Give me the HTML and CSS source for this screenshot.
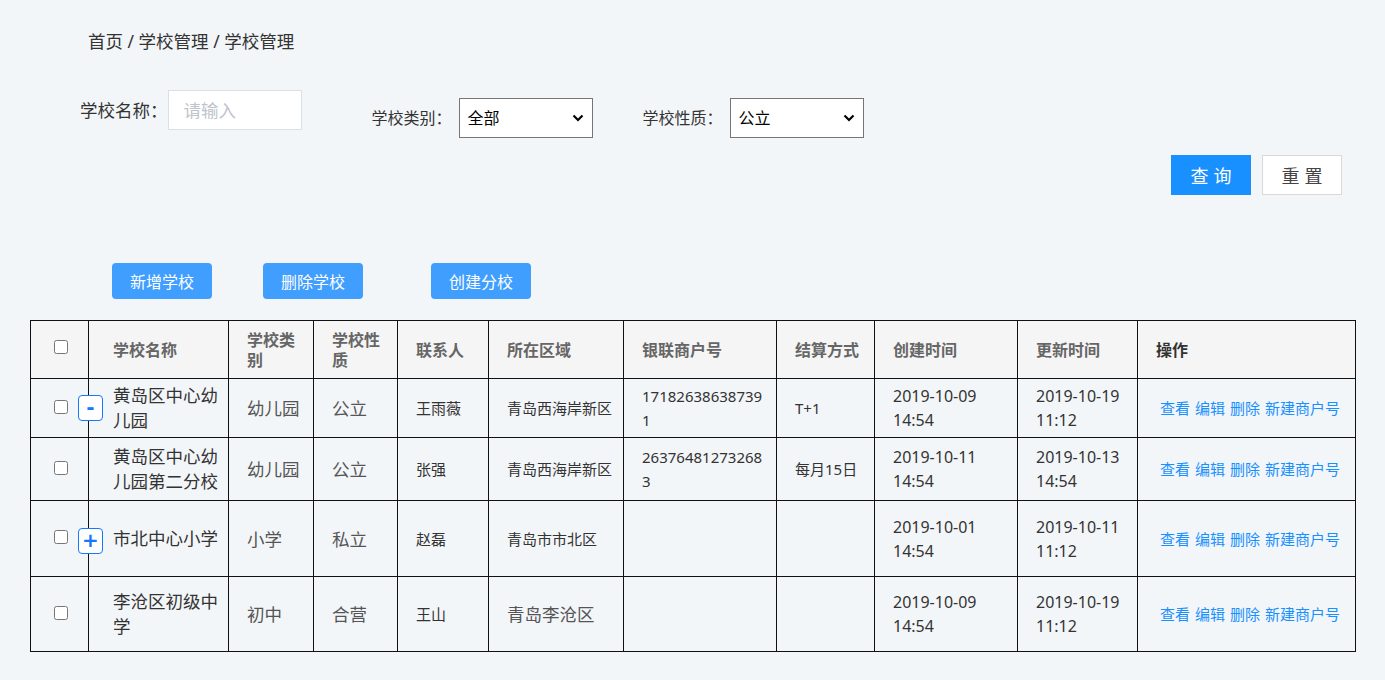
FILE: index.html
```html
<!DOCTYPE html>
<html lang="zh-CN">
<head>
<meta charset="utf-8">
<title>学校管理</title>
<link rel="stylesheet" href="styles.css">
</head>
<body>
<div class="page">
  <div class="breadcrumb">首页 / 学校管理 / 学校管理</div>

  <div class="filters">
    <div class="field field-first">
      <label class="label label-lg">学校名称：</label>
      <input class="text-input" type="text" placeholder="请输入">
    </div>
    <div class="field field-cat">
      <label class="label">学校类别：</label>
      <span class="select-wrap">
        <select class="select"><option>全部</option><option>幼儿园</option><option>小学</option><option>初中</option></select>
        <svg class="chevron" width="12" height="8" viewBox="0 0 12 8"><path d="M1.5 1.5 L6 6 L10.5 1.5" fill="none" stroke="#000" stroke-width="2.2"/></svg>
      </span>
    </div>
    <div class="field field-nature">
      <label class="label">学校性质：</label>
      <span class="select-wrap">
        <select class="select"><option>公立</option><option>私立</option><option>合营</option></select>
        <svg class="chevron" width="12" height="8" viewBox="0 0 12 8"><path d="M1.5 1.5 L6 6 L10.5 1.5" fill="none" stroke="#000" stroke-width="2.2"/></svg>
      </span>
    </div>
  </div>

  <div class="query-row">
    <button class="btn-primary">查询</button>
    <button class="btn-default">重置</button>
  </div>

  <div class="action-row">
    <button class="btn-action">新增学校</button>
    <button class="btn-action btn-del">删除学校</button>
    <button class="btn-action btn-branch">创建分校</button>
  </div>

  <table class="grid">
    <colgroup>
      <col class="c-check"><col class="c-name"><col class="c-type"><col class="c-nature"><col class="c-contact"><col class="c-area"><col class="c-merchant"><col class="c-settle"><col class="c-created"><col class="c-updated"><col class="c-ops">
    </colgroup>
    <thead>
      <tr class="head">
        <th class="cell-check"><input type="checkbox"></th>
        <th class="th-name">学校名称</th>
        <th>学校类别</th>
        <th>学校性质</th>
        <th>联系人</th>
        <th>所在区域</th>
        <th>银联商户号</th>
        <th>结算方式</th>
        <th>创建时间</th>
        <th>更新时间</th>
        <th class="th-ops">操作</th>
      </tr>
    </thead>
    <tbody>
      <tr class="r1">
        <td class="cell-check"><input type="checkbox"></td>
        <td class="td-name"><span class="toggle toggle-minus">-</span>黄岛区中心幼儿园</td>
        <td class="td-big">幼儿园</td>
        <td class="td-big">公立</td>
        <td>王雨薇</td>
        <td>青岛西海岸新区</td>
        <td class="td-num">171826386387391</td>
        <td>T+1</td>
        <td class="td-date">2019-10-09<br>14:54</td>
        <td class="td-date">2019-10-19<br>11:12</td>
        <td class="td-ops"><div class="ops"><a>查看</a><a>编辑</a><a>删除</a><a>新建商户号</a></div></td>
      </tr>
      <tr class="r2">
        <td class="cell-check"><input type="checkbox"></td>
        <td class="td-name">黄岛区中心幼儿园第二分校</td>
        <td class="td-big">幼儿园</td>
        <td class="td-big">公立</td>
        <td>张强</td>
        <td>青岛西海岸新区</td>
        <td class="td-num">263764812732683</td>
        <td>每月15日</td>
        <td class="td-date">2019-10-11<br>14:54</td>
        <td class="td-date">2019-10-13<br>14:54</td>
        <td class="td-ops"><div class="ops"><a>查看</a><a>编辑</a><a>删除</a><a>新建商户号</a></div></td>
      </tr>
      <tr class="r3">
        <td class="cell-check"><input type="checkbox"></td>
        <td class="td-name"><span class="toggle toggle-plus">+</span>市北中心小学</td>
        <td class="td-big">小学</td>
        <td class="td-big">私立</td>
        <td>赵磊</td>
        <td>青岛市市北区</td>
        <td class="td-num"></td>
        <td></td>
        <td class="td-date">2019-10-01<br>14:54</td>
        <td class="td-date">2019-10-11<br>11:12</td>
        <td class="td-ops"><div class="ops"><a>查看</a><a>编辑</a><a>删除</a><a>新建商户号</a></div></td>
      </tr>
      <tr class="r4">
        <td class="cell-check"><input type="checkbox"></td>
        <td class="td-name">李沧区初级中学</td>
        <td class="td-big">初中</td>
        <td class="td-big">合营</td>
        <td>王山</td>
        <td class="td-big">青岛李沧区</td>
        <td class="td-num"></td>
        <td></td>
        <td class="td-date">2019-10-09<br>14:54</td>
        <td class="td-date">2019-10-19<br>11:12</td>
        <td class="td-ops"><div class="ops"><a>查看</a><a>编辑</a><a>删除</a><a>新建商户号</a></div></td>
      </tr>
    </tbody>
  </table>
</div>
</body>
</html>
```

FILE: styles.css
```css
* { box-sizing: border-box; }

html, body {
  margin: 0;
  padding: 0;
  background: #f3f6f9;
}

body {
  font-family: "Noto Sans", "Noto Sans CJK SC", sans-serif;
  color: #333;
}

.page {
  padding-top: 28px;
}

.breadcrumb {
  margin-left: 88px;
  font-size: 17.5px;
  line-height: 26px;
  color: #333;
}

.filters {
  display: flex;
  align-items: flex-start;
  margin-top: 36px;
  padding-left: 80px;
}

.field {
  display: flex;
  align-items: center;
  gap: 7px;
}

.field-first {
  gap: 0;
}

.field-cat {
  margin-top: 8px;
  margin-left: 70px;
}

.field-nature {
  margin-top: 8px;
  margin-left: 50px;
}

.label {
  font-size: 16px;
  color: #333;
  line-height: 22px;
}

.label-lg {
  font-size: 17.5px;
}

.text-input {
  width: 134px;
  height: 40px;
  border: 1px solid #dcdfe6;
  background: #fff;
  padding: 0 15px;
  font-family: inherit;
  font-size: 17.5px;
  color: #333;
  outline: none;
  border-radius: 0;
}

.text-input::placeholder {
  color: #c0c4cc;
}

.select-wrap {
  position: relative;
  display: inline-block;
  width: 134px;
  height: 40px;
}

.select {
  appearance: none;
  -webkit-appearance: none;
  width: 134px;
  height: 40px;
  border: 1px solid #767676;
  background: #fff;
  font-family: inherit;
  font-size: 16px;
  color: #000;
  padding: 0 8px;
  border-radius: 0;
}

.chevron {
  position: absolute;
  right: 9px;
  top: 16px;
  pointer-events: none;
}

.query-row {
  display: flex;
  justify-content: flex-end;
  gap: 11px;
  margin-top: 17px;
  padding-right: 43px;
}

.btn-primary,
.btn-default {
  width: 80px;
  height: 40px;
  font-family: inherit;
  font-size: 18px;
  letter-spacing: 5px;
  padding: 0 0 0 5px;
  border-radius: 0;
  cursor: pointer;
}

.btn-primary {
  background: #1890ff;
  border: 1px solid #1890ff;
  color: #fff;
}

.btn-default {
  background: #fff;
  border: 1px solid #d9d9d9;
  color: #444;
}

.action-row {
  display: flex;
  margin-top: 68px;
  padding-left: 112px;
}

.btn-action {
  width: 100px;
  height: 36px;
  background: #409eff;
  border: none;
  border-radius: 4px;
  color: #fff;
  font-family: inherit;
  font-size: 16px;
  padding: 0;
  cursor: pointer;
}

.btn-del { margin-left: 51px; }
.btn-branch { margin-left: 68px; }

.grid {
  margin-top: 21px;
  margin-left: 30px;
  width: 1325px;
  table-layout: fixed;
  border-collapse: collapse;
  background: #f3f6f9;
}

.c-check { width: 58px; }
.c-name { width: 140px; }
.c-type { width: 85px; }
.c-nature { width: 84px; }
.c-contact { width: 91px; }
.c-area { width: 135px; }
.c-merchant { width: 153px; }
.c-settle { width: 98px; }
.c-created { width: 143px; }
.c-updated { width: 120px; }
.c-ops { width: 218px; }

.grid th,
.grid td {
  border: 1px solid #111;
  padding: 0 8px 0 18px;
  vertical-align: middle;
  text-align: left;
}

.grid th {
  background: #f5f5f5;
  font-size: 16px;
  font-weight: 700;
  color: #666;
  line-height: 20px;
}

.grid th.th-ops {
  color: #333;
}

.grid td {
  font-size: 15px;
  line-height: 24px;
  color: #333;
}

.grid .cell-check {
  padding: 0;
  text-align: center;
}

.cell-check input {
  margin: 0 0 6px 2px;
  width: 14px;
  height: 14px;
  vertical-align: middle;
}

.grid .th-name {
  padding-left: 24px;
}

.grid .td-name {
  position: relative;
  padding: 0 8px 0 24px;
  font-size: 17.5px;
  line-height: 25px;
  color: #333;
}

.grid .td-big {
  font-size: 17.5px;
  color: #555;
}

.grid .td-num {
  padding-right: 11px;
  word-break: break-all;
}

.grid .td-date {
  font-size: 16px;
}

.grid .td-ops {
  padding: 0 0 0 22px;
}

.ops {
  display: flex;
  gap: 5px;
  white-space: nowrap;
}

.ops a {
  color: #1890ff;
  font-size: 15px;
  cursor: pointer;
}

.toggle {
  position: absolute;
  left: -11px;
  top: 50%;
  transform: translateY(-50%);
  width: 25px;
  height: 26px;
  border: 1px solid #1677ff;
  border-radius: 4px;
  background: #fff;
  color: #1677ff;
  font-weight: 700;
  font-size: 20px;
  line-height: 22px;
  text-align: center;
  font-family: "DejaVu Sans", sans-serif;
}

.toggle-plus { margin-top: 2px; }

.head { height: 58px; }
.r1 { height: 59px; }
.r2 { height: 63px; }
.r3 { height: 76px; }
.r4 { height: 75px; }
```
